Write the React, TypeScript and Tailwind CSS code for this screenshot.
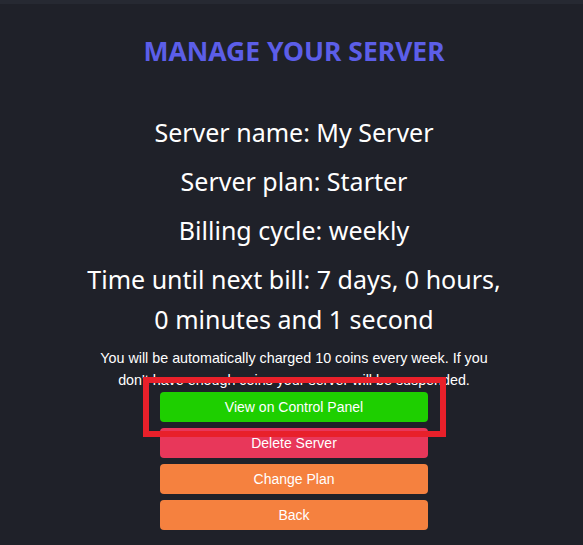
import React from 'react';

const info = [
  'Server name: My Server',
  'Server plan: Starter',
  'Billing cycle: weekly',
  'Time until next bill: 7 days, 0 hours, 0 minutes and 1 second',
];

export default function App() {
  return (
    <div className="min-h-[545px] bg-[#1f2129] border-t-4 border-[#262932]">
      <div className="flex flex-col items-center pl-[5px] pt-[29px]">
        <h1
          className="text-[26.5px] leading-[36px] font-bold text-[#5c5ee8]"
          style={{ fontFamily: '"Noto Sans", sans-serif' }}
        >
          MANAGE YOUR SERVER
        </h1>

        <div
          className="mt-[43px] flex flex-col gap-[9px] text-center text-white text-[25px] leading-[40px] w-[420px]"
          style={{ fontFamily: '"Noto Sans", sans-serif' }}
        >
          {info.map((line) => (
            <p key={line}>{line}</p>
          ))}
        </div>

        <p
          className="mt-[8px] w-[400px] text-center text-white text-[14.3px] leading-[22px]"
          style={{ fontFamily: '"Liberation Sans", Arial, sans-serif' }}
        >
          You will be automatically charged 10 coins every week. If you don't have enough coins your server will be
          suspended.
        </p>

        <div
          className="relative mt-px flex flex-col gap-[6px] w-[268px] text-white text-[14px]"
          style={{ fontFamily: '"Liberation Sans", Arial, sans-serif' }}
        >
          <button className="h-[30px] rounded bg-[#1ecf00]">View on Control Panel</button>
          <button className="h-[30px] rounded bg-[#e8375a]">Delete Server</button>
          <button className="h-[30px] rounded bg-[#f5813f]">Change Plan</button>
          <button className="h-[30px] rounded bg-[#f5813f]">Back</button>
          <div className="absolute left-[-17px] top-[-15px] w-[303px] h-[60px] border-[6px] border-[#e8202a]" />
        </div>
      </div>
    </div>
  );
}
